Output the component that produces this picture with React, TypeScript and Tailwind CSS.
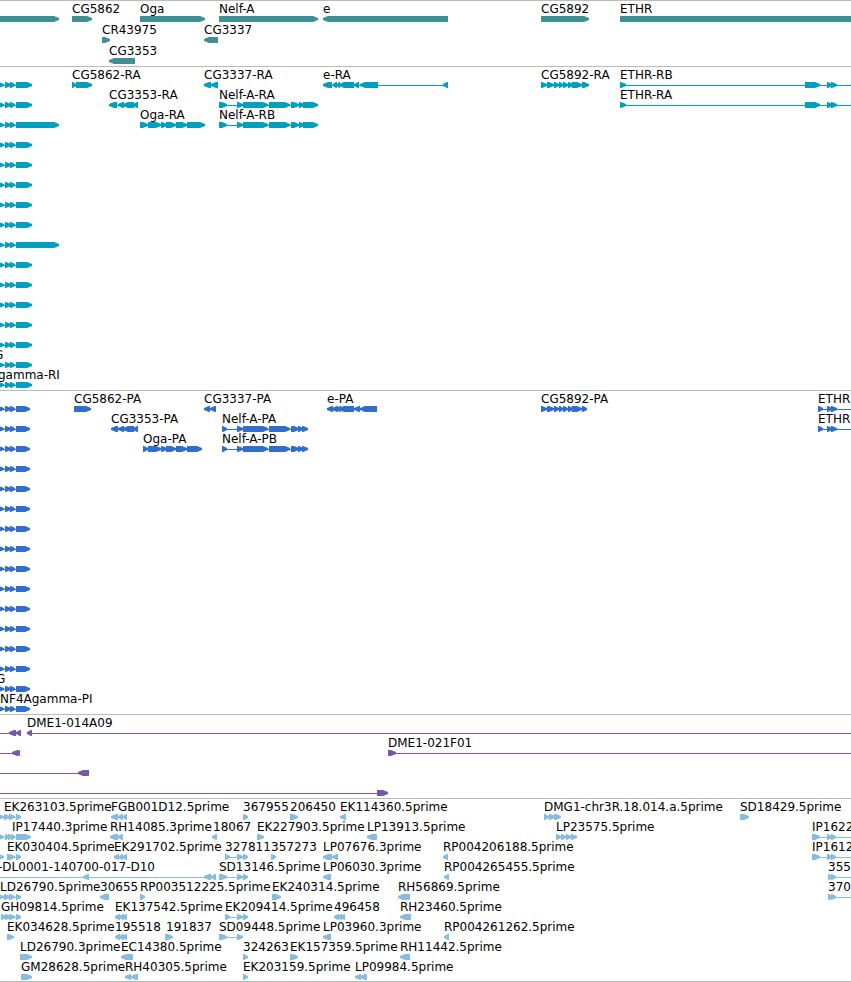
type Block = [number, number];

interface Feature {
  label?: string;
  at?: number;
  dir: 1 | -1;
  blocks: Block[];
  span?: Block;
}

interface Track {
  name: string;
  fill: string;
  rowGap: string;
  rows: Feature[][];
}

const EDGE = 4000;

const fwd = (label: string, at: number, blocks: Block[], span?: Block): Feature => ({ label, at, dir: 1, blocks, span });
const rev = (label: string, at: number, blocks: Block[], span?: Block): Feature => ({ label, at, dir: -1, blocks, span });

const head = (end: number): Feature => fwd("", 0, [[-3, 4], [5, 11], [10, 15], [16, end]], [0, end]);

const nelfR: Block[] = [[219, 227], [237, 243], [243, 268], [269, 290], [291, 299], [299, 304], [303, 318]];
const nelfP: Block[] = [[222, 227], [237, 243], [243, 268], [269, 290], [291, 299], [298, 303], [302, 308]];
const cg5892 = (end: number): Block[] => [
  [541, 547], [547, 554], [554, 559], [559, 563], [563, 568], [568, 573], [572, 582], [582, end],
];
const oga = (start: number, end: number): Block[] => [
  [start, 148], [148, 161], [161, 167], [166, 176], [176, 187], [187, end],
];
const ethrR: Block[] = [[620, 626], [805, 820], [827, 832], [831, 837]];
const ethrP: Block[] = [[818, 823], [827, 832], [831, 837]];
const trio: Block[] = [[115, 120], [119, 124], [123, 127]];
const leftEst: Block[] = [[-3, 4], [4, 10], [9, 15], [16, 21]];
const pair: Block[] = [[828, 832], [831, 836]];
const ip16: Block[] = [[812, 820], [827, 832], [831, 836]];

const fill = (count: number, end: number, long: number[]): Feature[][] =>
  Array.from({ length: count }, (_, i) => [head(long.includes(i) ? 59 : end)]);

const tracks: Track[] = [
  {
    name: "Genes",
    fill: "fill-[#408f94]",
    rowGap: "gap-px",
    rows: [
      [
        fwd("", 0, [[-10, 59]]),
        fwd("CG5862", 72, [[72, 92]]),
        fwd("Oga", 140, [[140, 205]]),
        fwd("Nelf-A", 219, [[219, 318]]),
        rev("e", 323, [[323, 448]]),
        fwd("CG5892", 541, [[541, 589]]),
        fwd("ETHR", 620, [[620, EDGE]]),
      ],
      [fwd("CR43975", 102, [[102, 110]]), rev("CG3337", 204, [[204, 218]])],
      [rev("CG3353", 109, [[109, 135]])],
    ],
  },
  {
    name: "Transcripts",
    fill: "fill-[#009fc0]",
    rowGap: "gap-0",
    rows: [
      [
        head(32),
        fwd("CG5862-RA", 72, [[72, 76], [76, 92]]),
        rev("CG3337-RA", 204, [[204, 211], [211, 218]]),
        rev("e-RA", 323, [[323, 332], [333, 337], [337, 340], [339, 354], [354, 359], [360, 378], [443, 448]]),
        fwd("CG5892-RA", 541, cg5892(589)),
        fwd("ETHR-RB", 620, ethrR, [620, EDGE]),
      ],
      [
        head(32),
        rev("CG3353-RA", 109, [[109, 117], [118, 124], [123, 134], [133, 138]]),
        fwd("Nelf-A-RA", 219, nelfR),
        fwd("ETHR-RA", 620, ethrR, [620, EDGE]),
      ],
      [head(59), fwd("Oga-RA", 140, oga(140, 205)), fwd("Nelf-A-RB", 219, nelfR)],
      ...fill(11, 32, [5]),
      [{ ...head(32), label: "G", at: -6 }],
      [{ ...head(32), label: "gamma-RI", at: -2 }],
    ],
  },
  {
    name: "Proteins",
    fill: "fill-[#316dcc]",
    rowGap: "gap-0",
    rows: [
      [
        head(30),
        fwd("CG5862-PA", 74, [[74, 91]]),
        rev("CG3337-PA", 204, [[204, 210], [210, 216]]),
        rev("e-PA", 327, [[327, 333], [332, 338], [337, 341], [339, 354], [354, 360], [360, 377]]),
        fwd("CG5892-PA", 541, cg5892(587)),
        fwd("ETHR", 818, ethrP, [818, EDGE]),
      ],
      [
        head(30),
        rev("CG3353-PA", 111, [[111, 118], [118, 124], [123, 134], [133, 138]]),
        fwd("Nelf-A-PA", 222, nelfP),
        fwd("ETHR", 818, ethrP, [818, EDGE]),
      ],
      [head(30), fwd("Oga-PA", 143, oga(143, 202)), fwd("Nelf-A-PB", 222, nelfP)],
      ...fill(11, 30, []),
      [{ ...head(30), label: "G", at: -4 }],
      [{ ...head(30), label: "NF4Agamma-PI", at: 0 }],
    ],
  },
  {
    name: "BAC ends",
    fill: "fill-[#7758a8]",
    rowGap: "gap-0",
    rows: [
      [rev("", 0, [[9, 16], [16, 21]], [0, 21]), rev("DME1-014A09", 27, [[27, 32]], [27, EDGE])],
      [rev("", 0, [[12, 18], [17, 20]], [0, 20]), fwd("DME1-021F01", 388, [[388, 396]], [388, EDGE])],
      [rev("", 0, [[78, 89]], [0, 89])],
      [fwd("", 0, [[377, 388]], [0, 388])],
    ],
  },
  {
    name: "ESTs",
    fill: "fill-[#88bcdf]",
    rowGap: "gap-0",
    rows: [
      [
        fwd("EK263103.5prime", 4, leftEst),
        rev("FGB001D12.5prime", 111, [[111, 118], [118, 123], [123, 127]]),
        fwd("367955", 243, [[243, 248]]),
        fwd("206450", 290, [[290, 298]]),
        rev("EK114360.5prime", 340, [[340, 346]]),
        fwd("DMG1-chr3R.18.014.a.5prime", 544, [[544, 549], [549, 555], [554, 561]]),
        fwd("SD18429.5prime", 740, [[740, 749]]),
      ],
      [
        fwd("IP17440.3prime", 12, [[-3, 4], [5, 9], [8, 12], [11, 15], [16, 31]]),
        rev("RH14085.3prime", 110, [[110, 118], [118, 123]]),
        rev("18067", 213, [[212, 217]]),
        fwd("EK227903.5prime", 257, [[257, 264]]),
        rev("LP13913.5prime", 367, [[367, 377]]),
        fwd("LP23575.5prime", 556, [[556, 561], [561, 566], [566, 571], [571, 577]]),
        fwd("IP1622", 812, ip16, [812, EDGE]),
      ],
      [
        fwd("", 0, [[-3, 4]]),
        fwd("EK030404.5prime", 7, [[7, 15], [16, 21]]),
        rev("EK291702.5prime", 114, [[114, 119], [119, 123], [123, 127]]),
        fwd("327811", 225, [[225, 230], [237, 243], [243, 248]]),
        fwd("357273", 271, [[271, 276]]),
        rev("LP07676.3prime", 323, [[323, 332], [332, 338]]),
        rev("RP004206188.5prime", 443, [[443, 448]]),
        fwd("IP1612", 812, ip16, [812, EDGE]),
      ],
      [
        rev("-DL0001-140700-017-D10", -2, [[83, 89], [204, 211], [211, 216]], [0, 216]),
        fwd("SD13146.5prime", 219, [[219, 227], [237, 243], [243, 248]]),
        rev("LP06030.3prime", 323, [[323, 331]]),
        rev("RP004265455.5prime", 444, [[444, 449]]),
        fwd("355", 828, pair, [828, EDGE]),
      ],
      [
        fwd("LD26790.5prime", 0, leftEst),
        rev("30655", 100, [[100, 109]]),
        fwd("RP003512225.5prime", 140, [[140, 145]]),
        fwd("EK240314.5prime", 272, [[272, 281]]),
        rev("RH56869.5prime", 398, [[398, 410]]),
        fwd("370", 828, pair, [828, EDGE]),
      ],
      [
        fwd("GH09814.5prime", 1, [[1, 6], [5, 10], [9, 15], [16, 21]]),
        rev("EK137542.5prime", 115, trio),
        fwd("EK209414.5prime", 225, [[225, 230], [237, 243], [243, 248]]),
        rev("496458", 334, [[334, 339], [338, 342], [341, 345]]),
        rev("RH23460.5prime", 400, [[400, 411]]),
      ],
      [
        fwd("EK034628.5prime", 7, [[7, 14]]),
        rev("195518", 115, trio),
        fwd("191837", 166, [[165, 173]]),
        fwd("SD09448.5prime", 219, [[219, 227], [237, 243]]),
        rev("LP03960.3prime", 323, [[323, 331]]),
        rev("RP004261262.5prime", 444, [[444, 449]]),
      ],
      [
        fwd("LD26790.3prime", 20, [[20, 32]]),
        rev("EC14380.5prime", 121, [[121, 133]]),
        fwd("324263", 243, [[243, 248]]),
        fwd("EK157359.5prime", 290, [[290, 298]]),
        rev("RH11442.5prime", 400, [[400, 410]]),
      ],
      [
        fwd("GM28628.5prime", 21, [[21, 32]]),
        rev("RH40305.5prime", 125, [[125, 131], [131, 138]]),
        fwd("EK203159.5prime", 243, [[243, 248]]),
        rev("LP09984.5prime", 355, [[355, 361], [360, 367]]),
      ],
    ],
  },
];

// A block is a 6px bar whose leading end narrows to a blunt point.
function arrow([start, end]: Block, dir: 1 | -1) {
  const tip = Math.min(5, end - start - 1);
  return dir === 1
    ? `${start},0 ${end - tip},0 ${end},2 ${end},4 ${end - tip},6 ${start},6`
    : `${end},0 ${start + tip},0 ${start},2 ${start},4 ${start + tip},6 ${end},6`;
}

function Glyphs({ feature }: { feature: Feature }) {
  const { blocks, dir } = feature;
  const [from, to] = feature.span ?? [blocks[0][0], blocks[blocks.length - 1][1]];
  return (
    <g>
      <rect x={from} y={3} width={to - from} height={1} />
      {blocks.map((b, i) => (
        <polygon key={i} points={arrow(b, dir)} />
      ))}
    </g>
  );
}

function Row({ features, fill }: { features: Feature[]; fill: string }) {
  return (
    <div className="relative pt-[14px]">
      {features
        .filter((f) => f.label)
        .map((f, i) => (
          <span key={i} className="absolute top-0 whitespace-nowrap" style={{ left: f.at }}>
            {f.label}
          </span>
        ))}
      <svg className={`block h-[6px] w-full ${fill}`} aria-hidden="true">
        {features.map((f, i) => (
          <Glyphs key={i} feature={f} />
        ))}
      </svg>
    </div>
  );
}

export default function App() {
  return (
    <main className="w-full overflow-hidden border-b border-[#bbbbbb] bg-white font-['DejaVu_Sans',sans-serif] text-[12px] leading-[14px] text-black">
      {tracks.map((t) => (
        <section
          key={t.name}
          aria-label={t.name}
          className={`flex flex-col border-t border-[#bbbbbb] pt-px pb-[2px] last:pb-px ${t.rowGap}`}
        >
          {t.rows.map((features, i) => (
            <Row key={i} features={features} fill={t.fill} />
          ))}
        </section>
      ))}
    </main>
  );
}
